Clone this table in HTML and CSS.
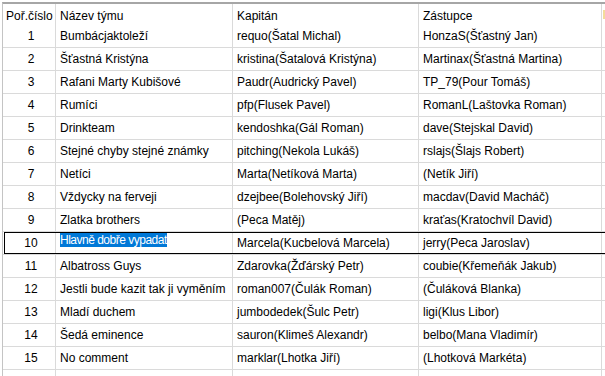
FILE: index.html
```html
<!DOCTYPE html>
<html lang="cs">
<head>
<meta charset="utf-8">
<title>Týmy</title>
<link rel="stylesheet" href="styles.css">
</head>
<body>
<div class="grid">
  <div class="row head">
    <div class="cell num-h">Poř.číslo</div>
    <div class="cell">Název týmu</div>
    <div class="cell">Kapitán</div>
    <div class="cell">Zástupce</div>
    <div class="cell extra"><span class="mark"></span></div>
  </div>
  <div class="row"><div class="cell num">1</div><div class="cell">Bumbácjaktoleží</div><div class="cell">requo(Šatal Michal)</div><div class="cell">HonzaS(Šťastný Jan)</div><div class="cell extra"></div></div>
  <div class="row"><div class="cell num">2</div><div class="cell">Šťastná Kristýna</div><div class="cell">kristina(Šatalová Kristýna)</div><div class="cell">Martinax(Šťastná Martina)</div><div class="cell extra"></div></div>
  <div class="row"><div class="cell num">3</div><div class="cell">Rafani Marty Kubišové</div><div class="cell">Paudr(Audrický Pavel)</div><div class="cell">TP_79(Pour Tomáš)</div><div class="cell extra"></div></div>
  <div class="row"><div class="cell num">4</div><div class="cell">Rumíci</div><div class="cell">pfp(Flusek Pavel)</div><div class="cell">RomanL(Laštovka Roman)</div><div class="cell extra"></div></div>
  <div class="row"><div class="cell num">5</div><div class="cell">Drinkteam</div><div class="cell">kendoshka(Gál Roman)</div><div class="cell">dave(Stejskal David)</div><div class="cell extra"></div></div>
  <div class="row"><div class="cell num">6</div><div class="cell">Stejné chyby stejné známky</div><div class="cell">pitching(Nekola Lukáš)</div><div class="cell">rslajs(Šlajs Robert)</div><div class="cell extra"></div></div>
  <div class="row"><div class="cell num">7</div><div class="cell">Netíci</div><div class="cell">Marta(Netíková Marta)</div><div class="cell">(Netík Jiří)</div><div class="cell extra"></div></div>
  <div class="row"><div class="cell num">8</div><div class="cell">Vždycky na ferveji</div><div class="cell">dzejbee(Bolehovský Jiří)</div><div class="cell">macdav(David Macháč)</div><div class="cell extra"></div></div>
  <div class="row"><div class="cell num">9</div><div class="cell">Zlatka brothers</div><div class="cell">(Peca Matěj)</div><div class="cell">kraťas(Kratochvíl David)</div><div class="cell extra"></div></div>
  <div class="row current"><div class="cell num">10</div><div class="cell editing"><span class="sel">Hlavně dobře vypadat</span></div><div class="cell">Marcela(Kucbelová Marcela)</div><div class="cell">jerry(Peca Jaroslav)</div><div class="cell extra"></div></div>
  <div class="row"><div class="cell num">11</div><div class="cell">Albatross Guys</div><div class="cell">Zdarovka(Žďárský Petr)</div><div class="cell">coubie(Křemeňák Jakub)</div><div class="cell extra"></div></div>
  <div class="row"><div class="cell num">12</div><div class="cell">Jestli bude kazit tak ji vyměním</div><div class="cell">roman007(Čulák Roman)</div><div class="cell">(Čuláková Blanka)</div><div class="cell extra"></div></div>
  <div class="row"><div class="cell num">13</div><div class="cell">Mladí duchem</div><div class="cell">jumbodedek(Šulc Petr)</div><div class="cell">ligi(Klus Libor)</div><div class="cell extra"></div></div>
  <div class="row"><div class="cell num">14</div><div class="cell">Šedá eminence</div><div class="cell">sauron(Klimeš Alexandr)</div><div class="cell">belbo(Mana Vladimír)</div><div class="cell extra"></div></div>
  <div class="row"><div class="cell num">15</div><div class="cell">No comment</div><div class="cell">marklar(Lhotka Jiří)</div><div class="cell">(Lhotková Markéta)</div><div class="cell extra"></div></div>
  <div class="row"><div class="cell num"></div><div class="cell"></div><div class="cell"></div><div class="cell"></div><div class="cell extra"></div></div>
</div>
</body>
</html>
```
FILE: styles.css
```css
html, body {
  margin: 0;
  padding: 0;
  background: #ffffff;
  overflow: hidden;
}
body {
  font-family: "Liberation Sans", Arial, sans-serif;
  font-size: 12px;
  color: #000000;
  width: 605px;
  height: 376px;
}
.grid {
  margin: 2px 0 0 2px;
  border-top: 2px solid #a6a6a6;
  border-left: 1px solid #c4c4c4;
}
.row {
  display: grid;
  grid-template-columns: 53px 177px 186px 183px 1fr;
  height: 23px;
  box-sizing: border-box;
  border-bottom: 1px solid #dadada;
  position: relative;
}
.row.head {
  height: 21px;
  border-bottom: none;
}
.cell {
  border-right: 1px solid #dadada;
  padding: 0 0 0 4px;
  display: flex;
  align-items: center;
  white-space: nowrap;
  overflow: hidden;
}
.head .cell {
  align-items: center;
  padding-top: 2px;
}
.num-h {
  padding-left: 3px;
}
.num {
  justify-content: center;
  padding-left: 4px;
}
.extra {
  border-right: none;
  position: relative;
}
.mark {
  position: absolute;
  left: 1px;
  top: 6px;
  width: 2px;
  height: 9px;
  background: #f3dc9a;
}
.row.current::after {
  content: "";
  position: absolute;
  left: 1px;
  top: 0;
  right: -4px;
  bottom: 0;
  border: 1px solid #000000;
  pointer-events: none;
}
.editing {
  align-items: flex-start;
  padding-top: 1px;
}
.sel {
  background: #0078d7;
  color: #ffffff;
  line-height: 14px;
  height: 14px;
  letter-spacing: -0.5px;
}
```
